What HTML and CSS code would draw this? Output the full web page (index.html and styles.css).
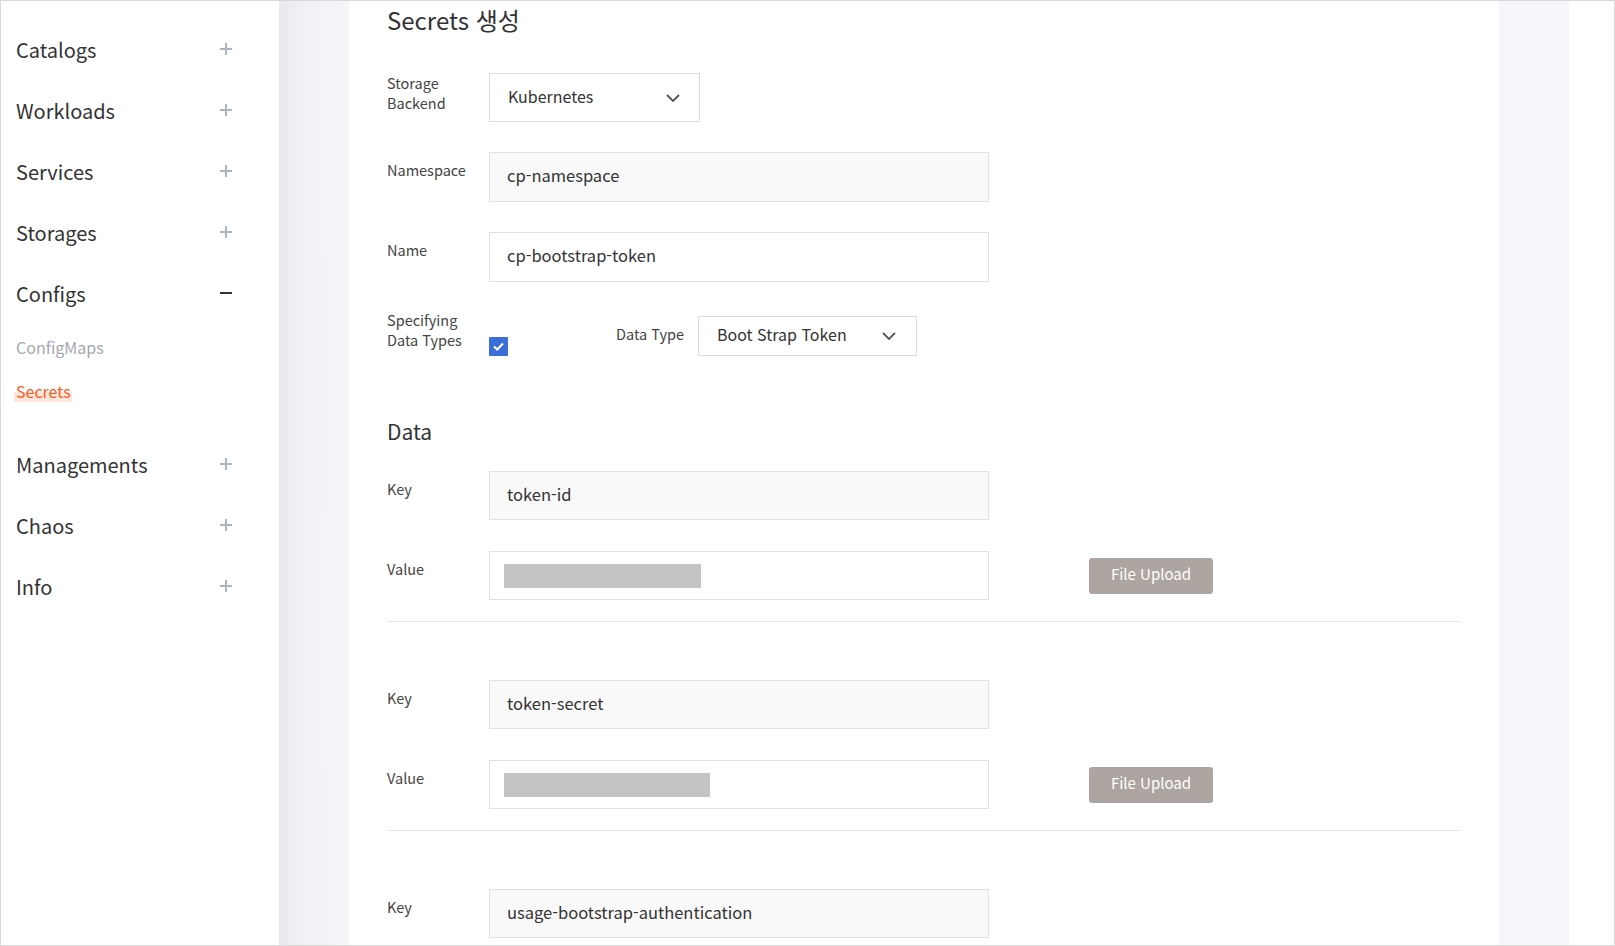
FILE: index.html
```html
<!DOCTYPE html>
<html lang="ko">
<head>
<meta charset="utf-8">
<title>Secrets 생성</title>
<link rel="stylesheet" href="styles.css">
</head>
<body>
<div class="frame">
  <nav class="sidebar">
    <div class="nav-item"><span>Catalogs</span><span class="ico plus"></span></div>
    <div class="nav-item"><span>Workloads</span><span class="ico plus"></span></div>
    <div class="nav-item"><span>Services</span><span class="ico plus"></span></div>
    <div class="nav-item"><span>Storages</span><span class="ico plus"></span></div>
    <div class="nav-item"><span>Configs</span><span class="ico minus"></span></div>
    <div class="submenu">
      <div class="sub-item">ConfigMaps</div>
      <div class="sub-item active"><span class="hl">Secrets</span></div>
    </div>
    <div class="nav-item"><span>Managements</span><span class="ico plus"></span></div>
    <div class="nav-item"><span>Chaos</span><span class="ico plus"></span></div>
    <div class="nav-item"><span>Info</span><span class="ico plus"></span></div>
  </nav>
  <div class="gutter"></div>
  <main class="panel">
    <h1 class="title">Secrets 생성</h1>

    <div class="row row-select">
      <div class="label two">Storage<br>Backend</div>
      <div class="select sel-backend"><span>Kubernetes</span>
        <svg class="chev" width="14" height="8" viewBox="0 0 14 8"><polyline points="1,1 7,7 13,1" fill="none" stroke="#555" stroke-width="1.8"/></svg>
      </div>
    </div>

    <div class="row">
      <div class="label">Namespace</div>
      <div class="input disabled">cp-namespace</div>
    </div>

    <div class="row">
      <div class="label">Name</div>
      <div class="input">cp-bootstrap-token</div>
    </div>

    <div class="row row-type">
      <div class="label two">Specifying<br>Data Types</div>
      <div class="checkbox">
        <svg width="19" height="19" viewBox="0 0 19 19"><polyline points="5,9.5 8.2,12.5 14,6.5" fill="none" stroke="#fff" stroke-width="2"/></svg>
      </div>
      <div class="label-inline">Data Type</div>
      <div class="select sel-type"><span>Boot Strap Token</span>
        <svg class="chev" width="14" height="8" viewBox="0 0 14 8"><polyline points="1,1 7,7 13,1" fill="none" stroke="#555" stroke-width="1.8"/></svg>
      </div>
    </div>

    <h2 class="section">Data</h2>

    <div class="data-block">
      <div class="row row-data">
        <div class="label">Key</div>
        <div class="input disabled">token-id</div>
      </div>
      <div class="row row-data row-value">
        <div class="label">Value</div>
        <div class="input value"><span class="mask" style="width:197px"></span></div>
        <button class="upload">File Upload</button>
      </div>
    </div>

    <div class="data-block">
      <div class="row row-data">
        <div class="label">Key</div>
        <div class="input disabled">token-secret</div>
      </div>
      <div class="row row-data row-value">
        <div class="label">Value</div>
        <div class="input value"><span class="mask" style="width:206px"></span></div>
        <button class="upload">File Upload</button>
      </div>
    </div>

    <div class="data-block last">
      <div class="row row-data">
        <div class="label">Key</div>
        <div class="input disabled">usage-bootstrap-authentication</div>
      </div>
    </div>
  </main>
  <div class="rightbar"></div>
  <div class="edge"></div>
</div>
</body>
</html>
```

FILE: styles.css
```css
* { box-sizing: border-box; }

html, body {
  margin: 0;
  padding: 0;
  background: #fff;
}

body {
  font-family: "Noto Sans CJK KR", "Noto Sans", sans-serif;
  color: #333;
}

.frame {
  width: 1615px;
  height: 946px;
  border: 1px solid #d9d9d9;
  display: flex;
  overflow: hidden;
}

/* Sidebar */
.sidebar {
  width: 278px;
  flex: none;
  background: #fff;
  padding: 19px 0 0 15px;
}

.nav-item {
  width: 216px;
  height: 61px;
  display: flex;
  align-items: center;
  justify-content: space-between;
  font-size: 20px;
  color: #333;
}

.nav-item > span:first-child {
  padding-bottom: 2px;
}

.ico {
  width: 12px;
  height: 12px;
  position: relative;
  flex: none;
  margin-top: -3px;
}

.plus::before,
.plus::after,
.minus::before {
  content: "";
  position: absolute;
  background: #adb4be;
}

.plus::before {
  left: 0;
  top: 5px;
  width: 12px;
  height: 2px;
}

.plus::after {
  left: 5px;
  top: 0;
  width: 2px;
  height: 12px;
}

.minus::before {
  left: 0;
  top: 5px;
  width: 12px;
  height: 2px;
  background: #333;
}

.submenu {
  padding-bottom: 22px;
}

.sub-item {
  height: 44px;
  display: flex;
  align-items: center;
  font-size: 16px;
  color: #a3a8b1;
}

.sub-item.active {
  color: #ff5a1e;
}

.hl {
  display: inline-block;
  line-height: 22px;
  padding: 0 1px 0 2px;
  margin-left: -2px;
  background: linear-gradient(to bottom, transparent 12px, #fde6dc 12px);
}

/* Gutter */
.gutter {
  width: 70px;
  flex: none;
  background: linear-gradient(to right, #e8e9ee 0%, #f0f1f5 35%, #f5f6fa 100%);
}

/* Panel */
.panel {
  width: 1150px;
  flex: none;
  background: #fff;
  padding: 0 39px 0 38px;
}

.title {
  margin: 0 0 28px;
  height: 44px;
  line-height: 38px;
  font-size: 24px;
  font-weight: 400;
  color: #333;
}

.row {
  display: flex;
  align-items: flex-start;
  margin-bottom: 30px;
}

.label {
  width: 102px;
  flex: none;
  font-size: 14.5px;
  line-height: 20px;
  color: #444;
  padding-top: 8px;
}

.label.two {
  padding-top: 0;
}

.input {
  width: 500px;
  height: 50px;
  border: 1px solid #e1e1e1;
  background: #fff;
  padding: 0 17px 4px;
  display: flex;
  align-items: center;
  font-size: 16.5px;
  color: #333;
}

.input.disabled {
  background: #f9f9f9;
}

.select {
  height: 49px;
  border: 1px solid #dcdcdc;
  background: #fff;
  display: flex;
  align-items: center;
  justify-content: space-between;
  padding: 0 19px 0 18px;
  font-size: 16px;
  color: #333;
}

.select span {
  padding-bottom: 4px;
}

.sel-backend {
  width: 211px;
}

.row-type {
  margin-top: -2px;
  margin-bottom: 0;
}

.checkbox {
  width: 19px;
  height: 19px;
  margin-top: 27px;
  background: #3a6fd9;
  border-radius: 1px;
  flex: none;
}

.checkbox svg {
  display: block;
}

.label-inline {
  margin: 14px 0 0 108px;
  font-size: 14.5px;
  line-height: 20px;
  color: #444;
  width: 82px;
  flex: none;
}

.sel-type {
  width: 219px;
  height: 40px;
  margin-top: 6px;
  padding: 0 20px 0 18px;
}

.section {
  margin: 60px 0 25px;
  height: 30px;
  line-height: 30px;
  font-size: 21px;
  font-weight: 400;
  color: #333;
}

.data-block {
  border-bottom: 1px solid #e6e6e6;
  padding-bottom: 21px;
  margin-bottom: 58px;
}

.data-block.last {
  border-bottom: none;
}

.row-data {
  margin-bottom: 31px;
}

.row-data:last-child {
  margin-bottom: 0;
}

.row-data .input {
  height: 49px;
}

.row-value {
  align-items: center;
}

.row-value .label {
  align-self: flex-start;
}

.input.value {
  padding: 0 14px;
}

.mask {
  display: block;
  height: 24px;
  background: #c4c4c4;
}

.upload {
  margin-left: 100px;
  width: 124px;
  height: 36px;
  border: none;
  border-radius: 3px;
  background: #ada59f;
  color: #fff;
  font-family: "Noto Sans CJK KR", "Noto Sans", sans-serif;
  font-size: 15px;
  padding: 0 0 4px;
}

.rightbar {
  width: 70px;
  flex: none;
  background: #f5f6fa;
}

.edge {
  flex: 1;
  background: #fff;
}
```
